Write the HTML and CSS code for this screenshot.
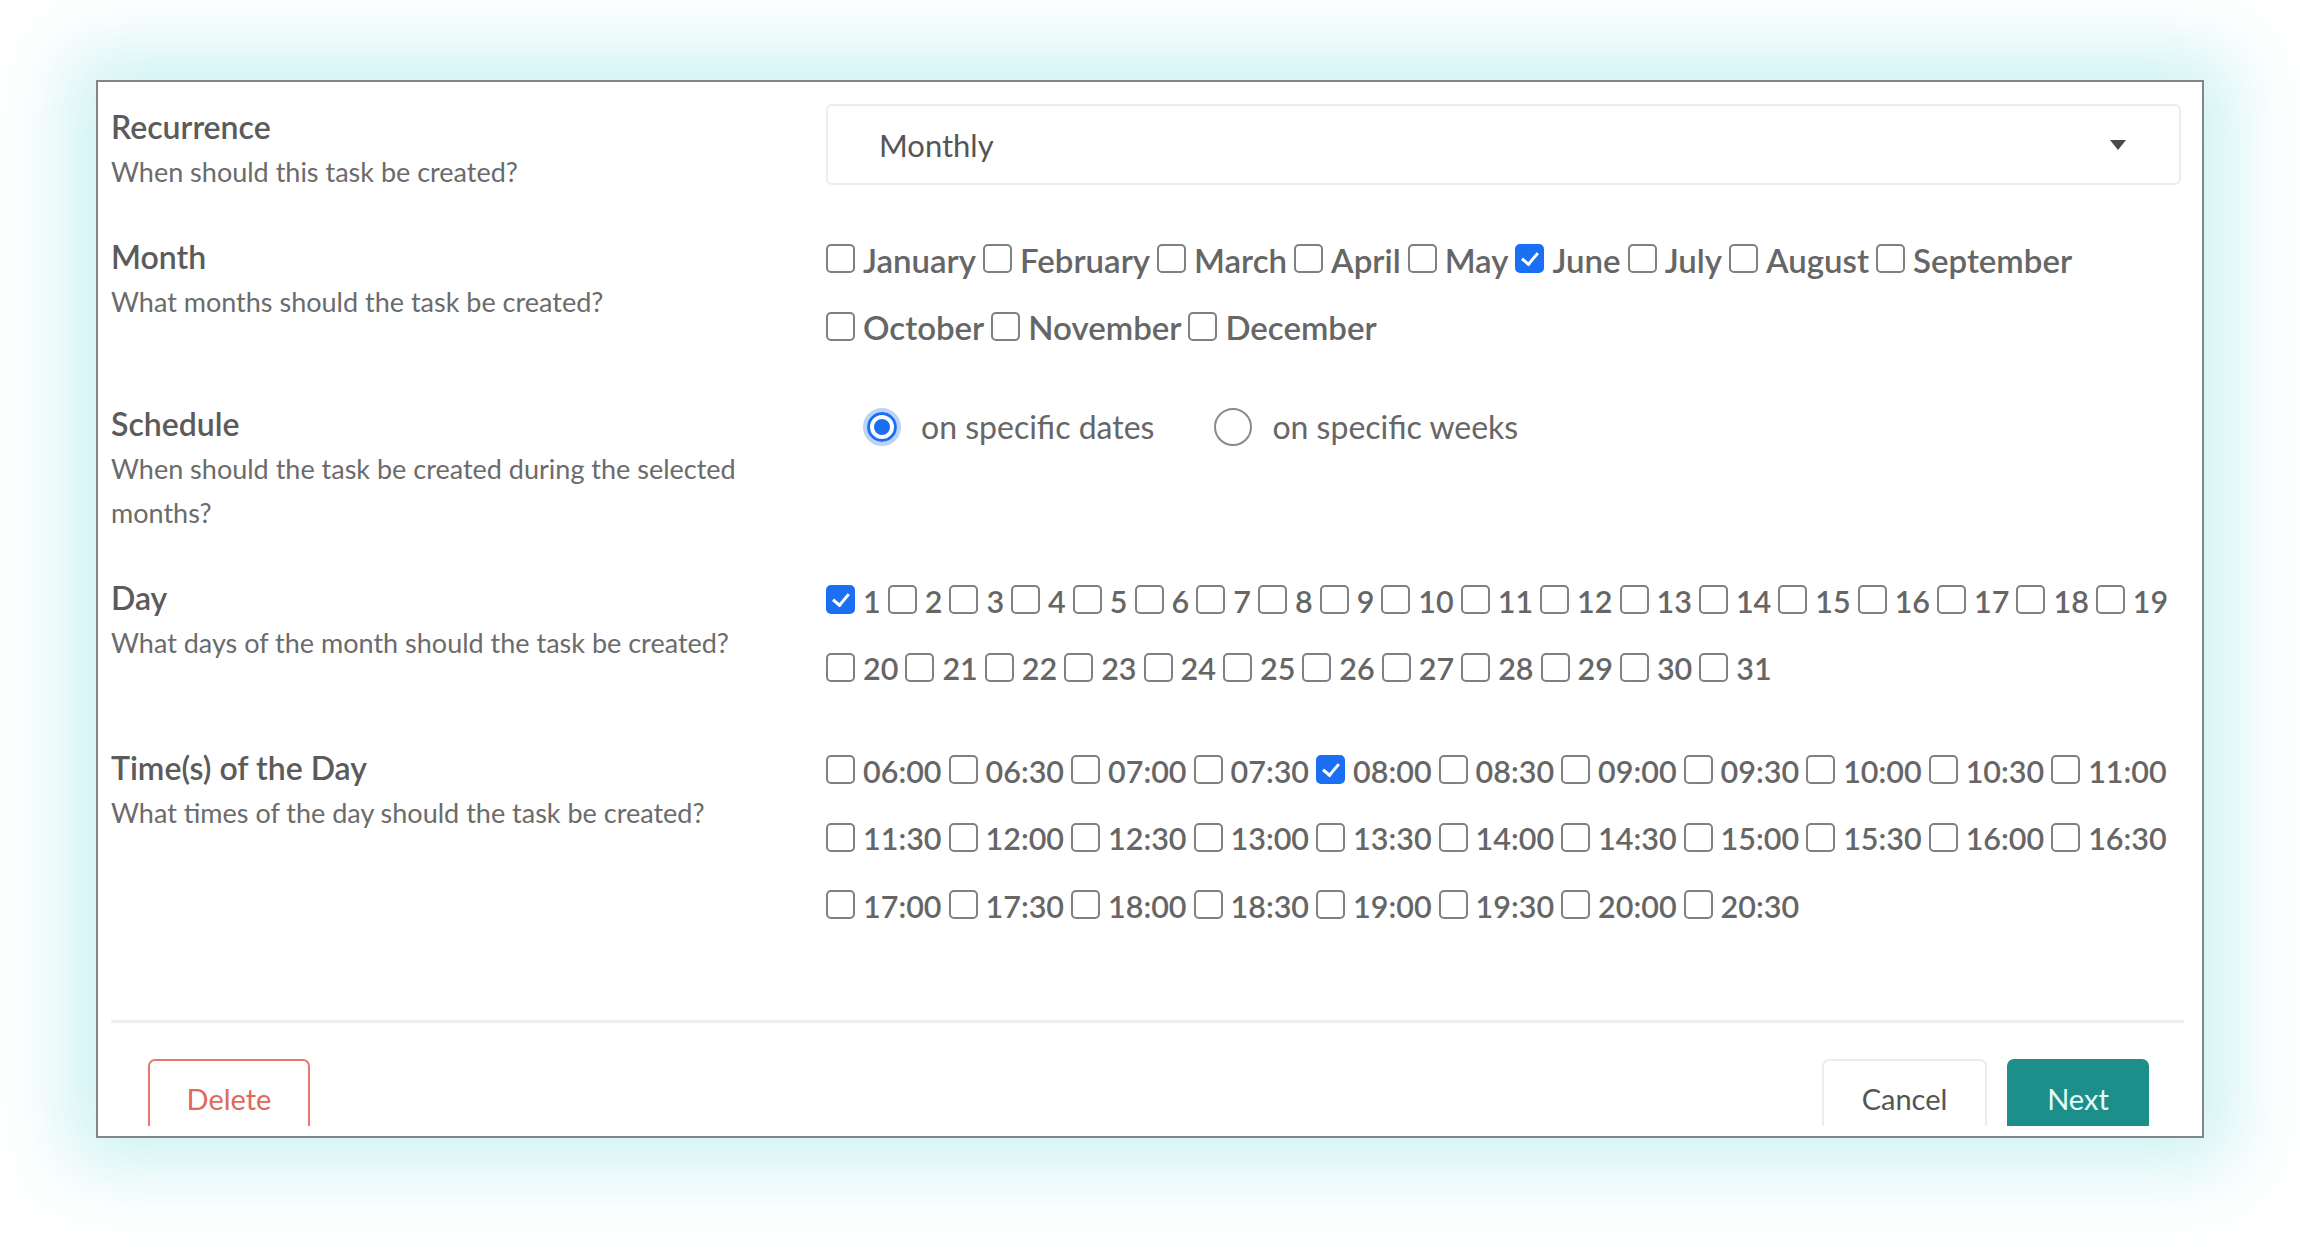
FILE: index.html
```html
<!DOCTYPE html>
<html lang="en">
<head>
<meta charset="utf-8">
<title>Task recurrence</title>
<link rel="stylesheet" href="styles.css">
</head>
<body>
<div class="card">
  <div class="card-body">
    <div class="fields">
      <div class="field">
        <div class="field-info">
          <div class="field-title">Recurrence</div>
          <div class="field-desc">When should this task be created?</div>
        </div>
        <div class="field-control field-control--select">
          <div class="select">
            <span class="select-value">Monthly</span>
            <svg class="select-caret" width="16" height="10" viewBox="0 0 16 10"><path d="M0 0 H16 L8 10 Z" fill="#4a4a4a"/></svg>
          </div>
        </div>
      </div>

      <div class="field">
        <div class="field-info">
          <div class="field-title">Month</div>
          <div class="field-desc">What months should the task be created?</div>
        </div>
        <div class="field-control opts--month">
          <div class="opt-line">
            <label class="opt"><input type="checkbox"><span>January</span></label>
            <label class="opt"><input type="checkbox"><span>February</span></label>
            <label class="opt"><input type="checkbox"><span>March</span></label>
            <label class="opt"><input type="checkbox"><span>April</span></label>
            <label class="opt"><input type="checkbox"><span>May</span></label>
            <label class="opt"><input type="checkbox" checked><span>June</span></label>
            <label class="opt"><input type="checkbox"><span>July</span></label>
            <label class="opt"><input type="checkbox"><span>August</span></label>
            <label class="opt"><input type="checkbox"><span>September</span></label>
          </div>
          <div class="opt-line">
            <label class="opt"><input type="checkbox"><span>October</span></label>
            <label class="opt"><input type="checkbox"><span>November</span></label>
            <label class="opt"><input type="checkbox"><span>December</span></label>
          </div>
        </div>
      </div>

      <div class="field">
        <div class="field-info">
          <div class="field-title">Schedule</div>
          <div class="field-desc">When should the task be created during the selected months?</div>
        </div>
        <div class="field-control">
          <div class="opt-line radio-line">
            <label class="radio-opt"><input type="radio" name="schedule" checked><span>on specific dates</span></label>
            <label class="radio-opt"><input type="radio" name="schedule"><span>on specific weeks</span></label>
          </div>
        </div>
      </div>

      <div class="field">
        <div class="field-info">
          <div class="field-title">Day</div>
          <div class="field-desc">What days of the month should the task be created?</div>
        </div>
        <div class="field-control">
          <div class="opt-line">
            <label class="opt"><input type="checkbox" checked><span>1</span></label>
            <label class="opt"><input type="checkbox"><span>2</span></label>
            <label class="opt"><input type="checkbox"><span>3</span></label>
            <label class="opt"><input type="checkbox"><span>4</span></label>
            <label class="opt"><input type="checkbox"><span>5</span></label>
            <label class="opt"><input type="checkbox"><span>6</span></label>
            <label class="opt"><input type="checkbox"><span>7</span></label>
            <label class="opt"><input type="checkbox"><span>8</span></label>
            <label class="opt"><input type="checkbox"><span>9</span></label>
            <label class="opt"><input type="checkbox"><span>10</span></label>
            <label class="opt"><input type="checkbox"><span>11</span></label>
            <label class="opt"><input type="checkbox"><span>12</span></label>
            <label class="opt"><input type="checkbox"><span>13</span></label>
            <label class="opt"><input type="checkbox"><span>14</span></label>
            <label class="opt"><input type="checkbox"><span>15</span></label>
            <label class="opt"><input type="checkbox"><span>16</span></label>
            <label class="opt"><input type="checkbox"><span>17</span></label>
            <label class="opt"><input type="checkbox"><span>18</span></label>
            <label class="opt"><input type="checkbox"><span>19</span></label>
          </div>
          <div class="opt-line">
            <label class="opt"><input type="checkbox"><span>20</span></label>
            <label class="opt"><input type="checkbox"><span>21</span></label>
            <label class="opt"><input type="checkbox"><span>22</span></label>
            <label class="opt"><input type="checkbox"><span>23</span></label>
            <label class="opt"><input type="checkbox"><span>24</span></label>
            <label class="opt"><input type="checkbox"><span>25</span></label>
            <label class="opt"><input type="checkbox"><span>26</span></label>
            <label class="opt"><input type="checkbox"><span>27</span></label>
            <label class="opt"><input type="checkbox"><span>28</span></label>
            <label class="opt"><input type="checkbox"><span>29</span></label>
            <label class="opt"><input type="checkbox"><span>30</span></label>
            <label class="opt"><input type="checkbox"><span>31</span></label>
          </div>
        </div>
      </div>

      <div class="field field--time">
        <div class="field-info">
          <div class="field-title">Time(s) of the Day</div>
          <div class="field-desc">What times of the day should the task be created?</div>
        </div>
        <div class="field-control">
          <div class="opt-line">
            <label class="opt"><input type="checkbox"><span>06:00</span></label>
            <label class="opt"><input type="checkbox"><span>06:30</span></label>
            <label class="opt"><input type="checkbox"><span>07:00</span></label>
            <label class="opt"><input type="checkbox"><span>07:30</span></label>
            <label class="opt"><input type="checkbox" checked><span>08:00</span></label>
            <label class="opt"><input type="checkbox"><span>08:30</span></label>
            <label class="opt"><input type="checkbox"><span>09:00</span></label>
            <label class="opt"><input type="checkbox"><span>09:30</span></label>
            <label class="opt"><input type="checkbox"><span>10:00</span></label>
            <label class="opt"><input type="checkbox"><span>10:30</span></label>
            <label class="opt"><input type="checkbox"><span>11:00</span></label>
          </div>
          <div class="opt-line">
            <label class="opt"><input type="checkbox"><span>11:30</span></label>
            <label class="opt"><input type="checkbox"><span>12:00</span></label>
            <label class="opt"><input type="checkbox"><span>12:30</span></label>
            <label class="opt"><input type="checkbox"><span>13:00</span></label>
            <label class="opt"><input type="checkbox"><span>13:30</span></label>
            <label class="opt"><input type="checkbox"><span>14:00</span></label>
            <label class="opt"><input type="checkbox"><span>14:30</span></label>
            <label class="opt"><input type="checkbox"><span>15:00</span></label>
            <label class="opt"><input type="checkbox"><span>15:30</span></label>
            <label class="opt"><input type="checkbox"><span>16:00</span></label>
            <label class="opt"><input type="checkbox"><span>16:30</span></label>
          </div>
          <div class="opt-line">
            <label class="opt"><input type="checkbox"><span>17:00</span></label>
            <label class="opt"><input type="checkbox"><span>17:30</span></label>
            <label class="opt"><input type="checkbox"><span>18:00</span></label>
            <label class="opt"><input type="checkbox"><span>18:30</span></label>
            <label class="opt"><input type="checkbox"><span>19:00</span></label>
            <label class="opt"><input type="checkbox"><span>19:30</span></label>
            <label class="opt"><input type="checkbox"><span>20:00</span></label>
            <label class="opt"><input type="checkbox"><span>20:30</span></label>
          </div>
        </div>
      </div>
    </div>

    <div class="footer">
      <button class="btn btn--danger" type="button">Delete</button>
      <div class="footer-actions">
        <button class="btn btn--default" type="button">Cancel</button>
        <button class="btn btn--primary" type="button">Next</button>
      </div>
    </div>
  </div>
</div>
</body>
</html>
```

FILE: styles.css
```css
* { box-sizing: border-box; }

html, body {
  margin: 0;
  padding: 0;
  background: #ffffff;
}

body {
  width: 2300px;
  height: 1252px;
  overflow: hidden;
  font-family: Lato, "Open Sans", sans-serif;
  color: #5a5a5a;
  padding-top: 80px;
  padding-left: 96px;
}

.card {
  width: 2108px;
  height: 1058px;
  background: #ffffff;
  border: 2px solid #80868a;
  padding: 0 18px 10px 13px;
  box-shadow: 0 0 70px 28px rgba(196, 240, 240, 0.85);
}

.card-body {
  height: 1044px;
  overflow: hidden;
  padding-top: 22px;
}

.fields {
  display: flex;
  flex-direction: column;
  gap: 40px;
}

.field {
  display: grid;
  grid-template-columns: 715px 1fr;
  align-items: start;
}

.field--time { margin-top: 3px; }

.field-title {
  font-size: 32px;
  line-height: 46px;
  font-weight: 600;
  color: #5b5b5b;
}

.field-desc {
  font-size: 27px;
  line-height: 44px;
  color: #6b6b6b;
  max-width: 640px;
}

.field-control {
  margin-top: -8px;
  margin-right: 3px;
}

.field-control--select { margin-top: 0; }

.select {
  height: 81px;
  border: 2px solid #ececec;
  border-radius: 6px;
  display: flex;
  align-items: center;
  justify-content: space-between;
  padding: 0 53px 0 51px;
}

.select-value {
  font-size: 31px;
  color: #555555;
}

.opt-line {
  display: flex;
  align-items: center;
  height: 67.5px;
}

.opt {
  display: inline-flex;
  align-items: center;
  gap: 8px;
  margin-right: 7px;
  font-size: 30.5px;
  font-weight: 600;
  color: #666666;
}

.opts--month .opt { font-size: 33px; }

.opt input {
  appearance: none;
  -webkit-appearance: none;
  margin: 0;
  width: 29px;
  height: 29px;
  border: 2.5px solid #808080;
  border-radius: 5px;
  background: #ffffff;
  position: relative;
  flex: none;
  top: -1px;
}

.opt input:checked {
  background: #1b6ff3;
  border-color: #1b6ff3;
}

.opt input:checked::after {
  content: "";
  position: absolute;
  left: 8px;
  top: 3px;
  width: 7px;
  height: 13px;
  border: solid #ffffff;
  border-width: 0 3px 3px 0;
  transform: rotate(40deg);
}

.radio-line { padding-left: 37px; }

.radio-opt {
  display: inline-flex;
  align-items: center;
  gap: 20px;
  margin-right: 60px;
  font-size: 32px;
  color: #666666;
}

.radio-opt input {
  appearance: none;
  -webkit-appearance: none;
  margin: 0;
  width: 38px;
  height: 38px;
  border-radius: 50%;
  border: 2.5px solid #8a8a8a;
  background: #ffffff;
  flex: none;
}

.radio-opt input:checked {
  border: 4px solid #bcd4fb;
  background: #1b6ff3;
  box-shadow: inset 0 0 0 3px #1b6ff3, inset 0 0 0 7px #ffffff;
}

.footer {
  margin-top: 80px;
  border-top: 3px solid #efefef;
  display: flex;
  justify-content: space-between;
  align-items: flex-start;
  padding: 36px 35px 0 37px;
}

.footer-actions {
  display: flex;
  gap: 20px;
}

.btn {
  height: 80px;
  border-radius: 7px;
  font-family: Lato, "Open Sans", sans-serif;
  font-size: 29px;
  background: #ffffff;
  padding: 0;
  cursor: pointer;
}

.btn--danger {
  width: 162px;
  border: 2px solid #e8786c;
  color: #e0685c;
}

.btn--default {
  width: 165px;
  border: 2px solid #ececec;
  color: #555555;
}

.btn--primary {
  width: 142px;
  border: 2px solid #1d8f8a;
  background: #1d8f8a;
  color: #e6faf8;
}
```
